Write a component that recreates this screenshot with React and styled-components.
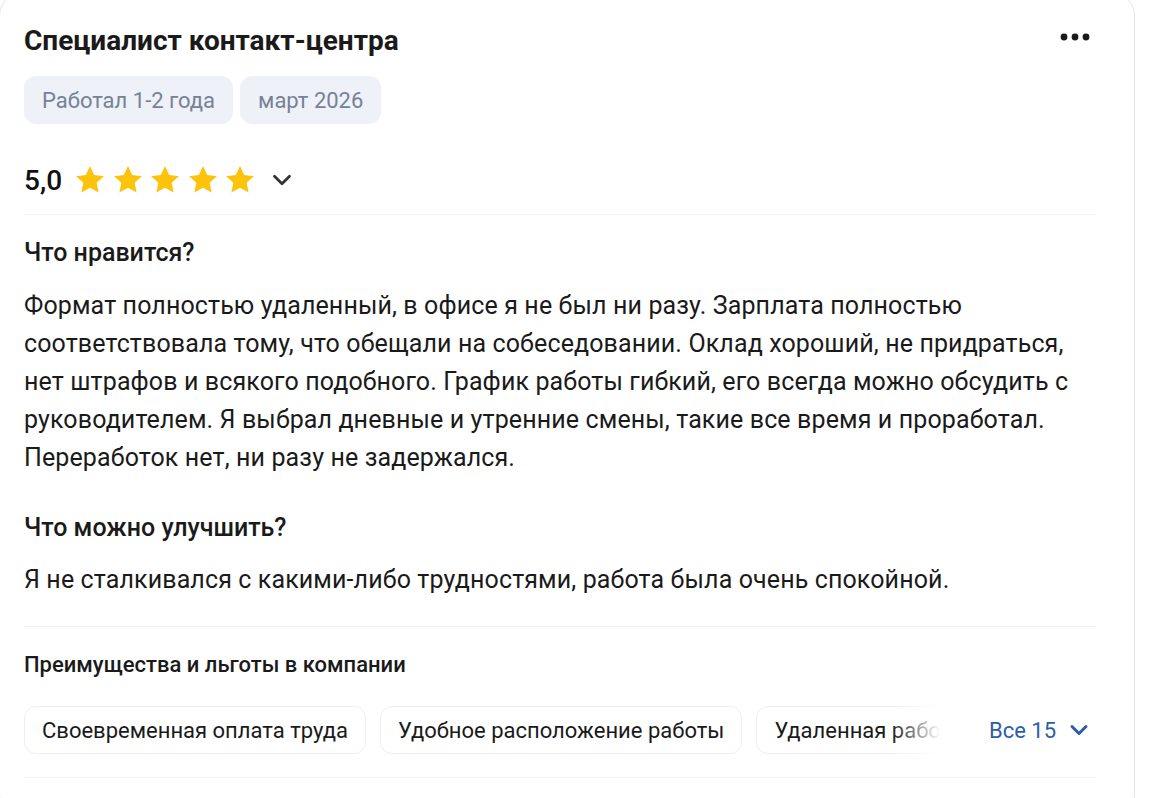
import React from "react";
import styled, { createGlobalStyle } from "styled-components";

const Global = createGlobalStyle`
  html, body { margin: 0; padding: 0; background: #ffffff; }
  body { font-family: Roboto, "Noto Sans", Arial, sans-serif; color: #1a1a1a; overflow: hidden; }
  * { box-sizing: border-box; }
`;

const Card = styled.div`
  width: 1136px;
  margin: -8px 0 0 -1px;
  background: #fff;
  border: 1px solid #e1e5ec;
  border-radius: 24px;
  padding: 32px 38px 40px 24px;
  display: flex;
  flex-direction: column;
`;

const Header = styled.div`
  display: flex;
  align-items: center;
  justify-content: space-between;
  height: 32px;
`;

const Title = styled.h2`
  margin: 0;
  font-size: 28px;
  line-height: 32px;
  font-weight: 700;
  color: #1a1a1a;
`;

const MoreBtn = styled.button`
  border: 0;
  background: none;
  padding: 0;
  width: 34px;
  height: 24px;
  margin: 0 4px 8px 0;
  display: flex;
  align-items: center;
  justify-content: center;
  cursor: pointer;
`;

const Tags = styled.div`
  display: flex;
  gap: 7px;
  margin-top: 19px;
`;

const Tag = styled.span`
  height: 48px;
  padding: 0 18px;
  display: inline-flex;
  align-items: center;
  border-radius: 12px;
  background: #eef1f7;
  color: #768296;
  font-size: 22px;
`;

const RatingRow = styled.div`
  display: flex;
  align-items: center;
  height: 40px;
  margin-top: 36px;
`;

const Score = styled.span`
  font-size: 28px;
  font-weight: 500;
  color: #111;
  margin-right: 11px;
`;

const Stars = styled.div`
  display: flex;
  gap: 3.5px;
`;

const Chevron = styled.span`
  display: inline-flex;
  margin-left: 10px;
  color: #333;
`;

const Divider = styled.div`
  height: 1px;
  background: #eff1f5;
  margin-top: ${(p) => p.$mt}px;
`;

const SectionTitle = styled.h3`
  margin: ${(p) => p.$mt}px 0 0;
  font-size: ${(p) => p.$size || 25}px;
  line-height: ${(p) => p.$lh || 30}px;
  font-weight: 500;
  color: #1a1a1a;
`;

const Body = styled.p`
  margin: ${(p) => p.$mt}px 0 0;
  font-size: 25px;
  line-height: 38px;
  letter-spacing: 0.12px;
  color: #1a1a1a;
`;

const BenefitsRow = styled.div`
  display: flex;
  align-items: center;
  margin-top: 27px;
`;

const ChipsScroller = styled.div`
  position: relative;
  flex: 1;
  display: flex;
  gap: 14px;
  overflow: hidden;
  &::after {
    content: "";
    position: absolute;
    top: 0;
    right: 0;
    bottom: 0;
    width: 55px;
    background: linear-gradient(to right, rgba(255,255,255,0), #fff 90%);
  }
`;

const Chip = styled.span`
  flex: none;
  height: 48px;
  padding: 0 17px;
  display: inline-flex;
  align-items: center;
  border: 1px solid #eceef4;
  border-radius: 12px;
  background: #fff;
  font-size: 22px;
  color: #1a1a1a;
  white-space: nowrap;
`;

const AllLink = styled.a`
  flex: none;
  display: inline-flex;
  align-items: center;
  gap: 9px;
  margin-left: 43px;
  margin-right: 3px;
  color: #2d5ea8;
  font-size: 22px;
  font-weight: 400;
  text-decoration: none;
  white-space: nowrap;
`;

const Star = () => (
  <svg width="34" height="34" viewBox="0 0 24 24">
    <path
      d="M12 2.2l2.95 6.3 6.85.78-5.1 4.7 1.38 6.82L12 17.4l-6.08 3.4 1.38-6.82-5.1-4.7 6.85-.78z"
      fill="#fdc20a"
    />
  </svg>
);

const ChevronDown = ({ size = 20, stroke = 2.6 }) => (
  <svg width={size} height={size} viewBox="0 0 24 24" fill="none">
    <path d="M6 9l6 6 6-6" stroke="currentColor" strokeWidth={stroke} strokeLinecap="round" strokeLinejoin="round" />
  </svg>
);

export default function App() {
  return (
    <>
      <Global />
      <Card>
        <Header>
          <Title>Специалист контакт-центра</Title>
          <MoreBtn aria-label="Ещё">
            <svg width="30" height="8" viewBox="0 0 30 8">
              <circle cx="4" cy="4" r="3.4" fill="#1a1a1a" />
              <circle cx="15" cy="4" r="3.4" fill="#1a1a1a" />
              <circle cx="26" cy="4" r="3.4" fill="#1a1a1a" />
            </svg>
          </MoreBtn>
        </Header>
        <Tags>
          <Tag>Работал 1-2 года</Tag>
          <Tag>март 2026</Tag>
        </Tags>
        <RatingRow>
          <Score>5,0</Score>
          <Stars>
            <Star /><Star /><Star /><Star /><Star />
          </Stars>
          <Chevron><ChevronDown size={30} stroke={2.2} /></Chevron>
        </RatingRow>
        <Divider $mt={14} />
        <SectionTitle $mt={23}>Что нравится?</SectionTitle>
        <Body $mt={19}>
          Формат полностью удаленный, в офисе я не был ни разу. Зарплата полностью
          соответствовала тому, что обещали на собеседовании. Оклад хороший, не придраться,
          нет штрафов и всякого подобного. График работы гибкий, его всегда можно обсудить с
          руководителем. Я выбрал дневные и утренние смены, такие все время и проработал.
          Переработок нет, ни разу не задержался.
        </Body>
        <SectionTitle $mt={36}>Что можно улучшить?</SectionTitle>
        <Body $mt={18}>
          Я не сталкивался с какими-либо трудностями, работа была очень спокойной.
        </Body>
        <Divider $mt={27} />
        <SectionTitle $mt={24} $size={22} $lh={28}>Преимущества и льготы в компании</SectionTitle>
        <BenefitsRow>
          <ChipsScroller>
            <Chip>Своевременная оплата труда</Chip>
            <Chip>Удобное расположение работы</Chip>
            <Chip>Удаленная работа</Chip>
            <Chip>Гибкий график</Chip>
          </ChipsScroller>
          <AllLink href="#">
            Все 15
            <ChevronDown size={28} stroke={2.6} />
          </AllLink>
        </BenefitsRow>
        <Divider $mt={23} />
      </Card>
    </>
  );
}
